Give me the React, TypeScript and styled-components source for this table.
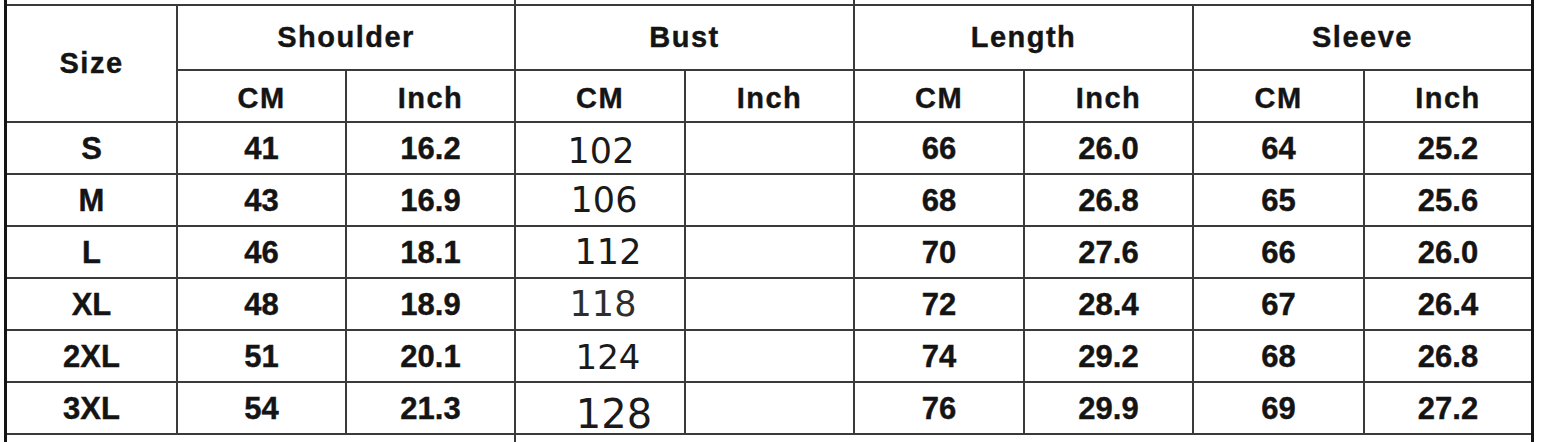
import React from "react";
import styled, { createGlobalStyle } from "styled-components";

const GlobalStyle = createGlobalStyle`
  html, body {
    margin: 0;
    padding: 0;
    background: #ffffff;
    overflow: hidden;
  }
`;

const Chart = styled.div`
  display: grid;
  grid-template-columns: 169px 167px 167px 168px 167px 168px 167px 169px 166px;
  grid-template-rows: 4px 63px 50px repeat(6, 50px) 10px;
  gap: 2px;
  width: fit-content;
  margin-left: 4px;
  background: #3a3a3a;
  border-left: 3px solid #141414;
  border-right: 3px solid #141414;
`;

interface SpanProps {
  $col: string;
  $row?: string;
}

const Stub = styled.div<SpanProps>`
  grid-column: ${(p) => p.$col};
  background: #ffffff;
`;

const HeadCell = styled.div<SpanProps>`
  grid-column: ${(p) => p.$col};
  grid-row: ${(p) => p.$row ?? "auto"};
  display: flex;
  align-items: center;
  justify-content: center;
  background: #ffffff;
  color: #141414;
  font-family: "Liberation Sans", Arial, sans-serif;
  font-weight: 700;
  font-size: 29px;
  letter-spacing: 1.5px;
  line-height: 1;
  -webkit-text-stroke: 0.4px #141414;
`;

const UnitCell = styled(HeadCell)`
  padding-top: 4px;
`;

const Cell = styled.div`
  display: flex;
  align-items: center;
  justify-content: center;
  background: #ffffff;
  color: #141414;
  font-family: "Liberation Sans", Arial, sans-serif;
  font-weight: 700;
  font-size: 31px;
  line-height: 1;
  padding-top: 1px;
  -webkit-text-stroke: 0.4px #141414;
`;

interface BustProps {
  $size: number;
  $dx: number;
  $dy: number;
  $faded?: boolean;
}

// the bust figures were typed in another font, slightly off-centre
const BustCell = styled.div<BustProps>`
  display: flex;
  align-items: center;
  justify-content: center;
  background: #ffffff;
  color: ${(p) => (p.$faded ? "#2e2e2e" : "#1a1a1a")};
  font-family: "DejaVu Sans", Verdana, sans-serif;
  font-weight: 400;
  font-size: ${(p) => p.$size}px;
  line-height: 1;
  padding-left: ${(p) => p.$dx * 2}px;
  padding-top: ${(p) => p.$dy * 2}px;
`;

const rows = [
  { size: "S", sh: ["41", "16.2"], bust: "102", len: ["66", "26.0"], sl: ["64", "25.2"], fs: 35, dx: 1, dy: 3 },
  { size: "M", sh: ["43", "16.9"], bust: "106", len: ["68", "26.8"], sl: ["65", "25.6"], fs: 35, dx: 4, dy: 0 },
  { size: "L", sh: ["46", "18.1"], bust: "112", len: ["70", "27.6"], sl: ["66", "26.0"], fs: 35, dx: 8, dy: 0 },
  { size: "XL", sh: ["48", "18.9"], bust: "118", len: ["72", "28.4"], sl: ["67", "26.4"], fs: 35, dx: 3, dy: 0, faded: true },
  { size: "2XL", sh: ["51", "20.1"], bust: "124", len: ["74", "29.2"], sl: ["68", "26.8"], fs: 34, dx: 8, dy: 1 },
  { size: "3XL", sh: ["54", "21.3"], bust: "128", len: ["76", "29.9"], sl: ["69", "27.2"], fs: 40, dx: 14, dy: 6 },
];

const groups = [
  { label: "Shoulder", col: "2 / 4" },
  { label: "Bust", col: "4 / 6" },
  { label: "Length", col: "6 / 8" },
  { label: "Sleeve", col: "8 / 10" },
];

export default function App() {
  return (
    <>
      <GlobalStyle />
      <Chart>
        <Stub $col="1 / 4" />
        <Stub $col="4 / 6" />
        <Stub $col="6 / 10" />

        <HeadCell $col="1 / 2" $row="2 / 4">Size</HeadCell>
        {groups.map((g) => (
          <HeadCell key={g.label} $col={g.col} $row="2 / 3">
            {g.label}
          </HeadCell>
        ))}
        {groups.map((g, i) => (
          <React.Fragment key={g.label}>
            <UnitCell $col={`${2 + i * 2} / ${3 + i * 2}`} $row="3 / 4">CM</UnitCell>
            <UnitCell $col={`${3 + i * 2} / ${4 + i * 2}`} $row="3 / 4">Inch</UnitCell>
          </React.Fragment>
        ))}

        {rows.map((r) => (
          <React.Fragment key={r.size}>
            <Cell>{r.size}</Cell>
            <Cell>{r.sh[0]}</Cell>
            <Cell>{r.sh[1]}</Cell>
            <BustCell $size={r.fs} $dx={r.dx} $dy={r.dy} $faded={r.faded}>
              {r.bust}
            </BustCell>
            <Cell />
            <Cell>{r.len[0]}</Cell>
            <Cell>{r.len[1]}</Cell>
            <Cell>{r.sl[0]}</Cell>
            <Cell>{r.sl[1]}</Cell>
          </React.Fragment>
        ))}

        <Stub $col="1 / 4" />
        <Stub $col="4 / 10" />
      </Chart>
    </>
  );
}
